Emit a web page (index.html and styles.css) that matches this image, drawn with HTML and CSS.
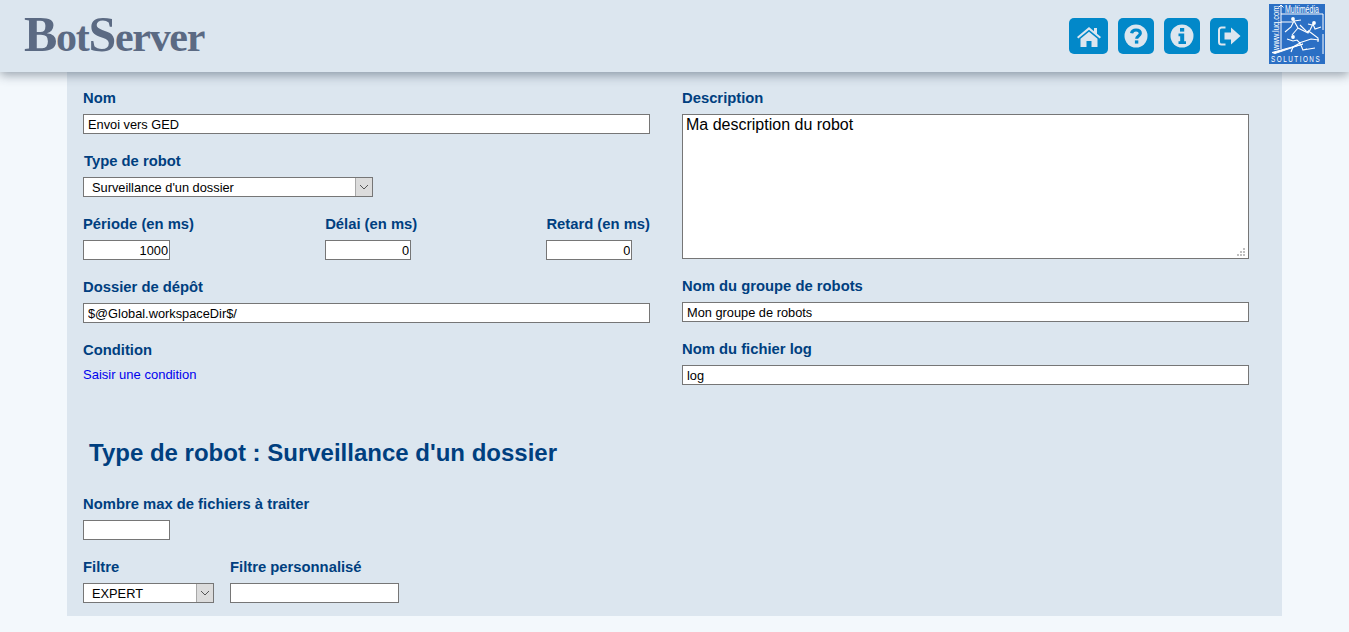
FILE: index.html
```html
<!DOCTYPE html>
<html lang="fr">
<head>
<meta charset="utf-8">
<title>BotServer</title>
<link rel="stylesheet" href="styles.css">
</head>
<body>
<header class="topbar">
  <div class="brand"><span class="cap">B</span>ot<span class="cap">S</span>erver</div>
  <nav class="tools">
    <a class="tool tool-home" href="#"><svg viewBox="0 0 26 24" width="26" height="24"><path fill="#dce6ef" d="M13 3 1 13l1.3 1.6L13 5.800l10.700 8.800L25 13l-4-3.300V4h-3v3.200z"/><path fill="#dce6ef" d="M13 7.800 4.500 14.800V23h6v-6h5v6h6v-8.200z"/></svg></a>
    <a class="tool tool-help" href="#"><svg viewBox="0 0 24 24" width="24" height="24"><circle cx="12" cy="12" r="11.500" fill="#dce6ef"/><path fill="none" stroke="#0288c9" stroke-width="3.200" d="M7.600 9.200c.4-2.200 2.200-3.200 4.400-3.200 2.500 0 4.300 1.300 4.300 3.300 0 2.700-3.600 2.700-3.600 5.400"/><rect x="10.900" y="16.400" width="3.400" height="3.200" fill="#0288c9"/></svg></a>
    <a class="tool tool-info" href="#"><svg viewBox="0 0 24 24" width="24" height="24"><circle cx="12" cy="12" r="11.500" fill="#dce6ef"/><rect x="10" y="4" width="4.200" height="3.600" fill="#0288c9"/><path fill="#0288c9" d="M8.500 9.500h5.700v7.800H16v2.700H8.500v-2.700h1.700v-5.100H8.500z"/></svg></a>
    <a class="tool tool-out" href="#"><svg viewBox="0 0 24 22" width="24" height="22"><path fill="none" stroke="#dce6ef" stroke-width="2" d="M8.500 2.500H4.500a2.500 2.500 0 0 0-2.500 2.500v12a2.500 2.500 0 0 0 2.500 2.500h4"/><path fill="#dce6ef" d="M7.500 7.500h6.500V2.500L23.500 11 14 19.500v-5H7.500z"/></svg></a>
  </nav>
  <div class="partner">
    <svg class="partner-art" viewBox="0 0 56 60" width="56" height="60">
      <rect width="56" height="60" fill="#2b6fc4"/>
      <g fill="none" stroke="#fff" stroke-width="1">
        <path d="M12 1v44M9.500 3.500 12 1l2.500 2.500M12 10h42v16M12 18h12M54 30v20"/>
        <path d="M3 48.500 34 40l-28 9.500z" fill="#fff"/>
      </g>
      <g fill="none" stroke="#fff" stroke-width="1.100">
        <path d="M16 28l6-5 3-6 4 7 10 5 1-3M29 24l-6 7M25 17l7-1"/>
        <path d="M31 21l6 6 3 1 4-8 2 5 6-2M41 28l8 6v4M43 21l-4-1"/>
        <path d="M18 35l6 2 4-1 3 3 3 7 4-1M30 39l12-4 8 1M31 39l-7 4-2 5M34 46l12-2"/>
      </g>
      <circle cx="24" cy="15" r="1.900" fill="#fff"/>
      <circle cx="45" cy="19" r="1.900" fill="#fff"/>
      <circle cx="24" cy="33" r="1.900" fill="#fff"/>
      <text class="pt-top" transform="translate(16 9) scale(.7 1)">Multimédia</text>
      <text class="pt-side" transform="translate(10 46) rotate(-90) scale(.84 1)">www.luq.com</text>
      <text class="pt-bot" transform="translate(2 58) scale(.7 1)">SOLUTIONS</text>
    </svg>
  </div>
</header>

<main class="panel">
  <div class="columns">
    <section class="col">
      <div class="field">
        <label class="lbl">Nom</label>
        <input class="inp inp-full" type="text" value="Envoi vers GED">
      </div>
      <div class="field">
        <label class="lbl lbl-nudge">Type de robot</label>
        <div class="sel sel-type">
          <select class="sel-native"><option>Surveillance d'un dossier</option></select>
          <span class="sel-btn"><svg viewBox="0 0 10 6" width="10" height="6"><path d="M1 1l4 4 4-4" fill="none" stroke="#555" stroke-width="1"/></svg></span>
        </div>
      </div>
      <div class="field triple">
        <div class="mini mini-first">
          <label class="lbl">Période (en ms)</label>
          <input class="inp inp-num" type="text" value="1000">
        </div>
        <div class="mini">
          <label class="lbl">Délai (en ms)</label>
          <input class="inp inp-num inp-short" type="text" value="0">
        </div>
        <div class="mini">
          <label class="lbl">Retard (en ms)</label>
          <input class="inp inp-num inp-short" type="text" value="0">
        </div>
      </div>
      <div class="field">
        <label class="lbl">Dossier de dépôt</label>
        <input class="inp inp-full" type="text" value="$@Global.workspaceDir$/">
      </div>
      <div class="field">
        <label class="lbl">Condition</label>
        <a class="cond" href="#">Saisir une condition</a>
      </div>
    </section>
    <section class="col">
      <div class="field">
        <label class="lbl">Description</label>
        <div class="area-wrap">
          <textarea class="area">Ma description du robot</textarea>
          <span class="grip"></span>
        </div>
      </div>
      <div class="field">
        <label class="lbl">Nom du groupe de robots</label>
        <input class="inp inp-full" type="text" value="Mon groupe de robots">
      </div>
      <div class="field">
        <label class="lbl">Nom du fichier log</label>
        <input class="inp inp-full" type="text" value="log">
      </div>
    </section>
  </div>

  <h2 class="subtitle">Type de robot : Surveillance d'un dossier</h2>

  <div class="field">
    <label class="lbl">Nombre max de fichiers à traiter</label>
    <input class="inp inp-num" type="text">
  </div>
  <div class="field filters">
    <div class="mini">
      <label class="lbl">Filtre</label>
      <div class="sel sel-filter">
        <select class="sel-native"><option>EXPERT</option></select>
        <span class="sel-btn"><svg viewBox="0 0 10 6" width="10" height="6"><path d="M1 1l4 4 4-4" fill="none" stroke="#555" stroke-width="1"/></svg></span>
      </div>
    </div>
    <div class="mini">
      <label class="lbl">Filtre personnalisé</label>
      <input class="inp inp-custom" type="text">
    </div>
  </div>
</main>
</body>
</html>
```
FILE: styles.css
```css
* { box-sizing: border-box; }
html, body { margin: 0; padding: 0; height: 100%; overflow: hidden; }
body {
  background: #f3f8fc;
  font-family: "Liberation Sans", Arial, sans-serif;
  font-size: 12px;
  color: #000;
}
.topbar {
  position: relative;
  z-index: 2;
  display: flex;
  align-items: center;
  height: 72px;
  padding: 0 24px;
  background: #dce6ef;
  box-shadow: 0 3px 10px rgba(40, 55, 75, .45);
}
.brand {
  font-family: "Liberation Serif", "Times New Roman", serif;
  font-weight: bold;
  font-size: 42px;
  letter-spacing: -1.300px;
  color: #5b6a83;
  line-height: 50px;
  margin-bottom: 2px;
}
.cap { font-size: 50px; }
.tools { display: flex; gap: 10px; margin-left: auto; }
.tool {
  display: flex;
  align-items: center;
  justify-content: center;
  height: 36px;
  background: #0288c9;
  border-radius: 5px;
}
.tool-home { width: 39px; }
.tool-help { width: 36px; }
.tool-info { width: 36px; }
.tool-out { width: 38px; }
.partner { margin-left: 21px; align-self: flex-start; margin-top: 4px; height: 60px; }
.partner-art { display: block; }
.pt-top { font: 10px "Liberation Sans", sans-serif; fill: #fff; }
.pt-side { font: 9px "Liberation Sans", sans-serif; fill: #fff; }
.pt-bot { font: 9px "Liberation Sans", sans-serif; letter-spacing: 2.200px; fill: #fff; }

.panel {
  width: 1215px;
  height: 544px;
  margin-left: 67px;
  padding: 18px 16px 0;
  background: #dce6ef;
}
.columns {
  display: grid;
  grid-template-columns: 567px 567px;
  column-gap: 32px;
  height: 326px;
}
.field { margin-bottom: 19px; }
.lbl {
  display: block;
  height: 16px;
  margin-bottom: 8px;
  font-size: 14.800px;
  line-height: 16px;
  font-weight: bold;
  color: #003f7f;
}
.lbl-nudge { padding-left: 1px; }
.inp {
  display: block;
  height: 20px;
  padding: 0 4px;
  border: 1px solid #767676;
  border-radius: 0;
  background: #fff;
  font-family: "Liberation Sans", Arial, sans-serif;
  font-size: 12.800px;
  color: #000;
  outline: none;
}
.inp-full { width: 100%; }
.inp-num { width: 87px; text-align: right; padding: 0 1px; }
.inp-short { width: 86px; }
.inp-custom { width: 169px; }
.triple { display: flex; justify-content: space-between; }
.mini-first { min-width: 113px; }
.filters { display: flex; gap: 16px; margin-bottom: 0; }
.sel {
  position: relative;
  height: 20px;
  background: #fff;
  border: 1px solid #767676;
}
.sel-type { width: 290px; }
.sel-filter { width: 131px; }
.sel-native {
  display: block;
  width: 100%;
  height: 18px;
  padding: 0 0 0 8px;
  border: 0;
  border-radius: 0;
  background: transparent;
  appearance: none;
  font-family: "Liberation Sans", Arial, sans-serif;
  font-size: 12.800px;
  color: #000;
  outline: none;
}
.sel-btn {
  position: absolute;
  top: 0;
  right: 0;
  bottom: 0;
  width: 17px;
  display: flex;
  align-items: center;
  justify-content: center;
  background: #dcdcdc;
  border-left: 1px solid #a8a8a8;
  pointer-events: none;
}
.cond {
  display: block;
  padding-top: 2px;
  font-size: 13px;
  line-height: 14px;
  color: #0000ee;
  text-decoration: none;
}
.area-wrap { position: relative; height: 145px; }
.area {
  display: block;
  width: 100%;
  height: 100%;
  padding: 1px 3px;
  border: 1px solid #767676;
  border-radius: 0;
  background: #fff;
  font-family: "Liberation Sans", Arial, sans-serif;
  font-size: 16px;
  line-height: 18px;
  color: #000;
  outline: none;
  resize: none;
}
.grip {
  position: absolute;
  right: 4px;
  bottom: 3px;
  width: 8px;
  height: 8px;
  background:
    linear-gradient(#c0c0c0, #c0c0c0) 6px 0 / 2px 2px no-repeat,
    linear-gradient(#c0c0c0, #c0c0c0) 3px 3px / 2px 2px no-repeat,
    linear-gradient(#c0c0c0, #c0c0c0) 6px 3px / 2px 2px no-repeat,
    linear-gradient(#c0c0c0, #c0c0c0) 0 6px / 2px 2px no-repeat,
    linear-gradient(#c0c0c0, #c0c0c0) 3px 6px / 2px 2px no-repeat,
    linear-gradient(#c0c0c0, #c0c0c0) 6px 6px / 2px 2px no-repeat;
}
.subtitle {
  margin: 23px 0 29px 6px;
  height: 28px;
  font-size: 24px;
  line-height: 28px;
  font-weight: bold;
  color: #003f7f;
}
```
